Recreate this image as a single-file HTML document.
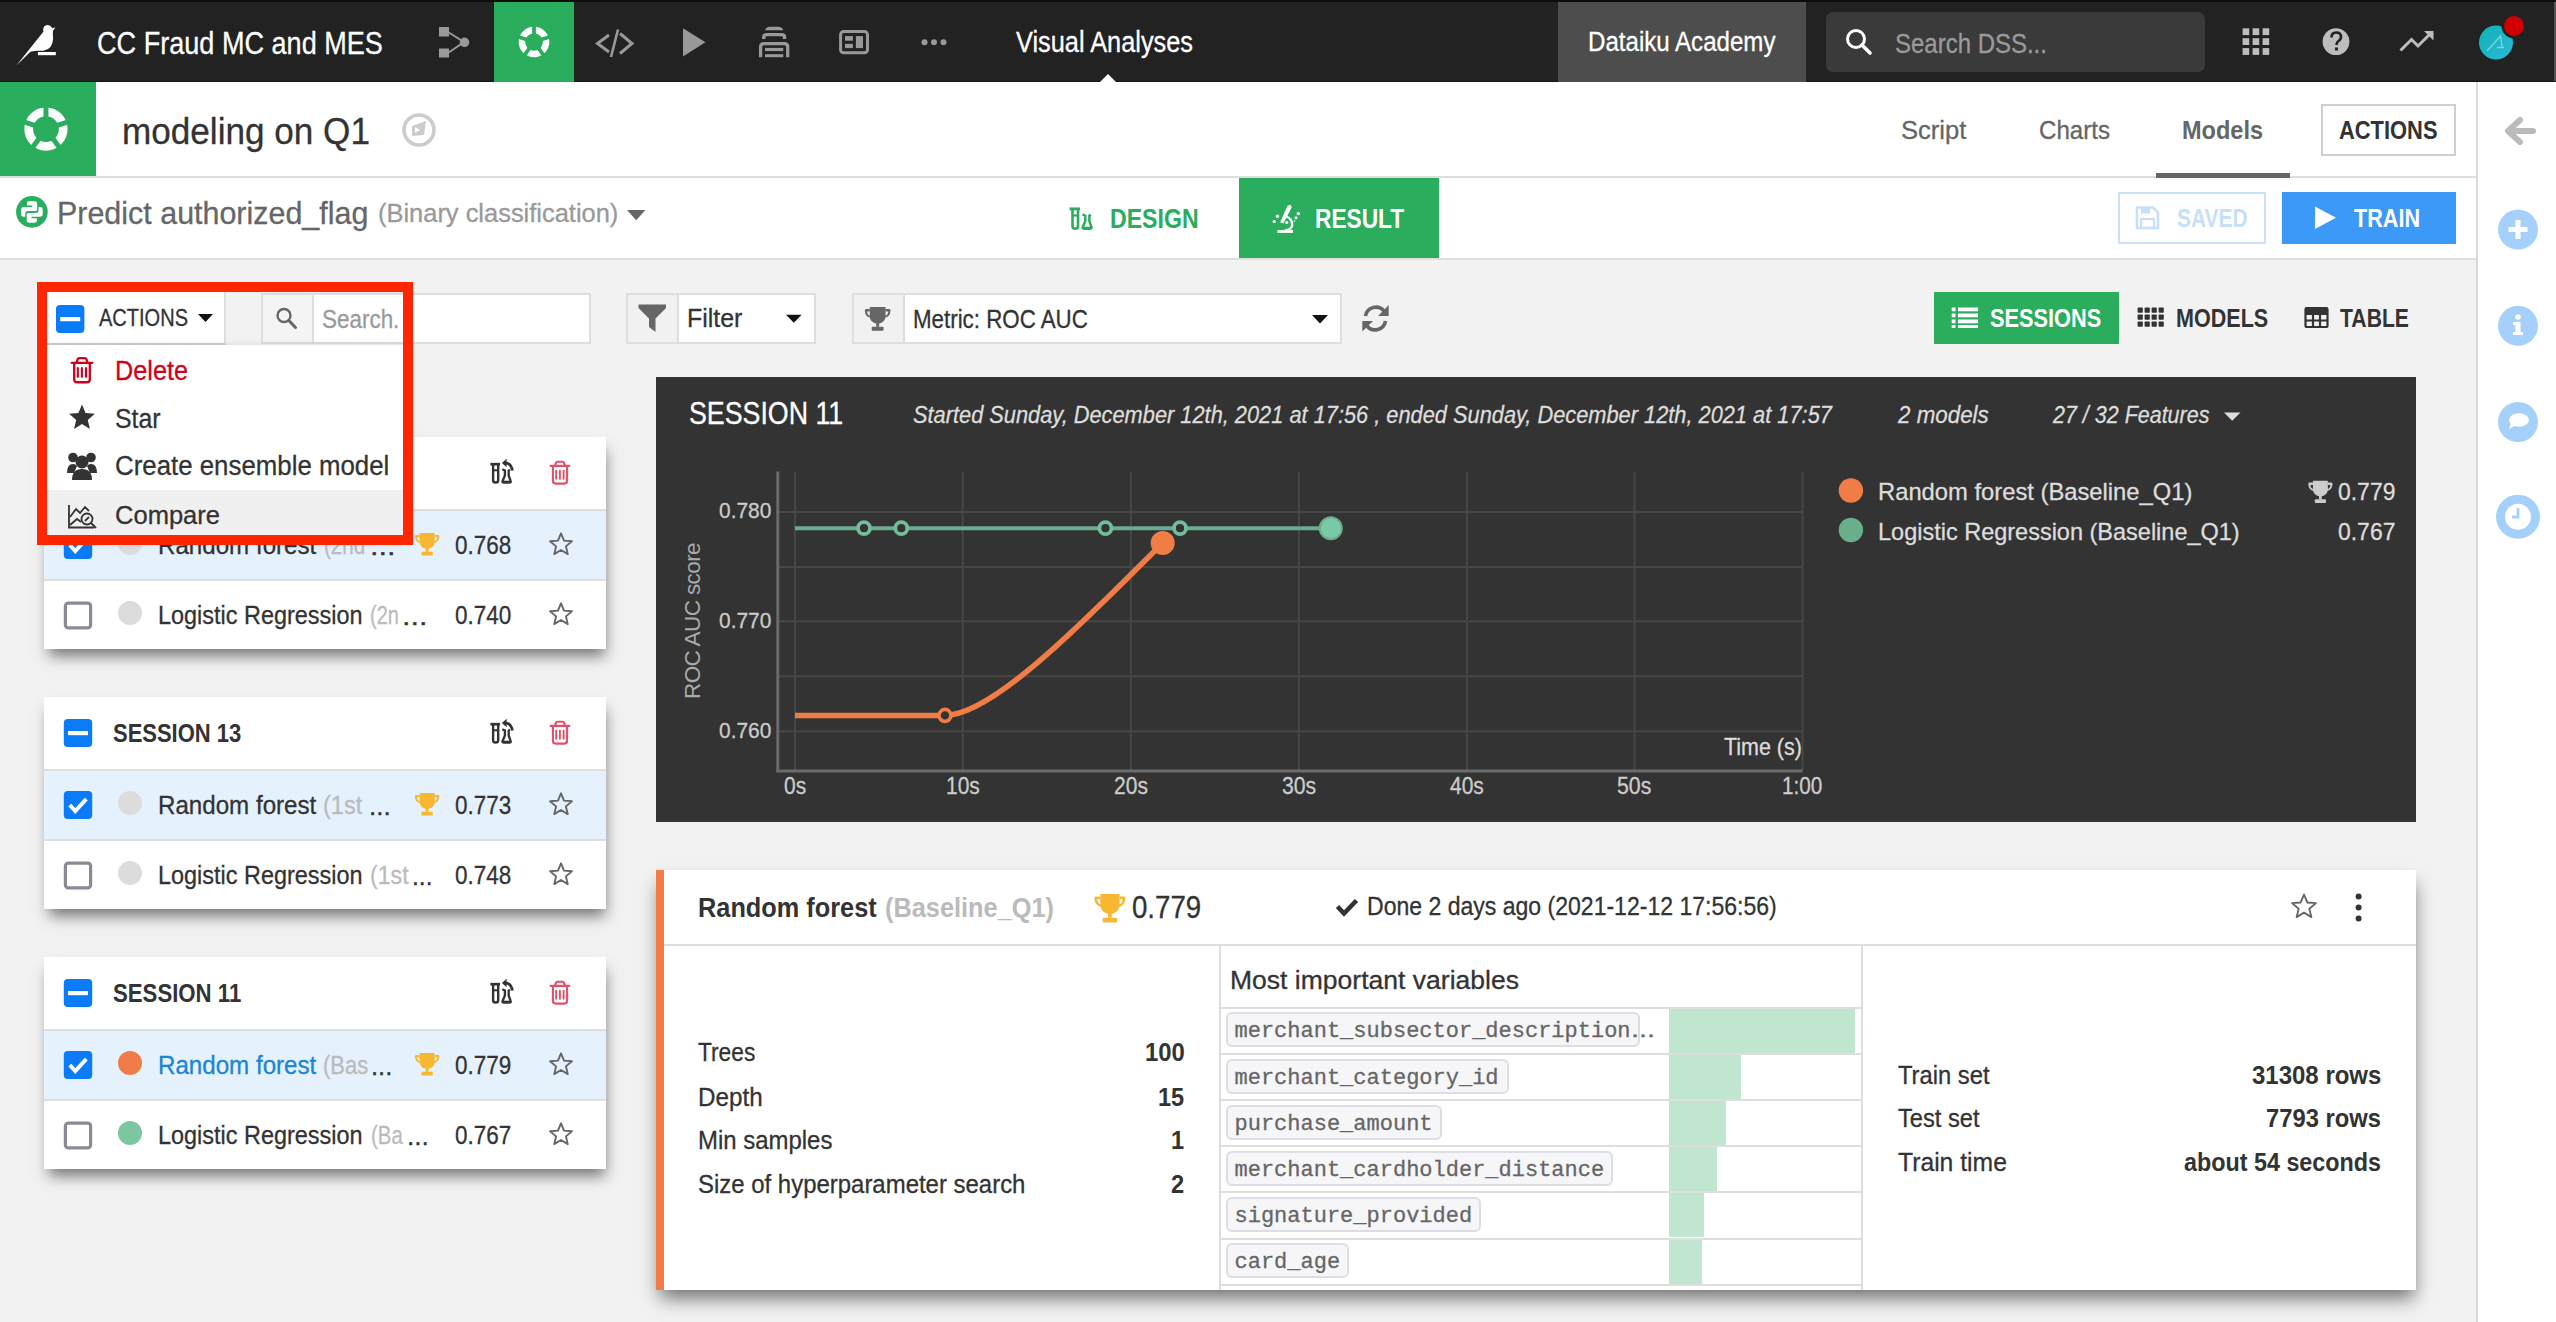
<!DOCTYPE html>
<html><head><meta charset="utf-8"><style>
html,body{margin:0;padding:0;}
body{width:2556px;height:1322px;overflow:hidden;background:#f2f2f2;position:relative;font-family:"Liberation Sans",sans-serif;}
.b{position:absolute;}
.t{position:absolute;white-space:nowrap;transform-origin:0 0;}
.ov{position:absolute;left:0;top:0;}
.L{position:absolute;left:0;top:0;width:2556px;height:1322px;}
</style></head><body>
<div class="L" style="z-index:1"><div class="b" style="left:0px;top:0px;width:2556px;height:2px;background:#0d0d0d;"></div><div class="b" style="left:0px;top:2px;width:2556px;height:80px;background:#222222;"></div><div class="b" style="left:2554px;top:2px;width:2px;height:80px;background:#555555;"></div><div class="b" style="left:0px;top:81px;width:2556px;height:1px;background:#161616;"></div><div class="b" style="left:494px;top:2px;width:80px;height:80px;background:#2aad5c;"></div><div class="b" style="left:1558px;top:2px;width:248px;height:80px;background:#4d4d4d;"></div><div class="b" style="left:1826px;top:12px;width:379px;height:60px;background:#3a3a3a;border-radius:7px;"></div><div class="b" style="left:0px;top:82px;width:2476px;height:95px;background:#ffffff;"></div><div class="b" style="left:0px;top:176px;width:2476px;height:2px;background:#dedede;"></div><div class="b" style="left:0px;top:82px;width:96px;height:94px;background:#2aad5c;"></div><div class="b" style="left:0px;top:178px;width:2476px;height:80px;background:#ffffff;"></div><div class="b" style="left:0px;top:258px;width:2476px;height:2px;background:#dedede;"></div><div class="b" style="left:1239px;top:178px;width:200px;height:80px;background:#2aad5c;"></div><div class="b" style="left:2156px;top:173px;width:134px;height:5px;background:#666666;"></div><div class="b" style="left:2321px;top:104px;width:135px;height:52px;background:transparent;border:2px solid #cfcfcf;box-sizing:border-box;"></div><div class="b" style="left:2118px;top:192px;width:148px;height:52px;background:#ffffff;border:2px solid #c8e1fb;box-sizing:border-box;"></div><div class="b" style="left:2282px;top:192px;width:174px;height:52px;background:#3d99f7;"></div><div class="b" style="left:2476px;top:82px;width:80px;height:1240px;background:#ffffff;"></div><div class="b" style="left:2476px;top:82px;width:2px;height:1240px;background:#dadada;"></div><div class="b" style="left:261px;top:293px;width:330px;height:51px;background:#ffffff;border:2px solid #dedede;box-sizing:border-box;"></div><div class="b" style="left:263px;top:295px;width:49px;height:47px;background:#f4f4f4;border-right:2px solid #dedede;"></div><div class="b" style="left:626px;top:293px;width:190px;height:51px;background:#ffffff;border:2px solid #dedede;box-sizing:border-box;"></div><div class="b" style="left:628px;top:295px;width:49px;height:47px;background:#f1f1f1;border-right:2px solid #dedede;"></div><div class="b" style="left:852px;top:293px;width:490px;height:51px;background:#ffffff;border:2px solid #dedede;box-sizing:border-box;"></div><div class="b" style="left:854px;top:295px;width:49px;height:47px;background:#f1f1f1;border-right:2px solid #dedede;"></div><div class="b" style="left:1934px;top:292px;width:185px;height:52px;background:#2aad5c;"></div><div class="b" style="left:44px;top:437px;width:562px;height:212px;background:#ffffff;box-shadow:2px 10px 14px -3px rgba(0,0,0,0.52);"></div><div class="b" style="left:44px;top:509px;width:562px;height:2px;background:#dedede;"></div><div class="b" style="left:44px;top:511px;width:562px;height:68px;background:#e5f1fd;"></div><div class="b" style="left:44px;top:579px;width:562px;height:2px;background:#dedede;"></div><div class="b" style="left:44px;top:697px;width:562px;height:212px;background:#ffffff;box-shadow:2px 10px 14px -3px rgba(0,0,0,0.52);"></div><div class="b" style="left:44px;top:769px;width:562px;height:2px;background:#dedede;"></div><div class="b" style="left:44px;top:771px;width:562px;height:68px;background:#e5f1fd;"></div><div class="b" style="left:44px;top:839px;width:562px;height:2px;background:#dedede;"></div><div class="b" style="left:44px;top:957px;width:562px;height:212px;background:#ffffff;box-shadow:2px 10px 14px -3px rgba(0,0,0,0.52);"></div><div class="b" style="left:44px;top:1029px;width:562px;height:2px;background:#dedede;"></div><div class="b" style="left:44px;top:1031px;width:562px;height:68px;background:#e5f1fd;"></div><div class="b" style="left:44px;top:1099px;width:562px;height:2px;background:#dedede;"></div><div class="b" style="left:656px;top:377px;width:1760px;height:445px;background:#333333;"></div><div class="b" style="left:656px;top:870px;width:1760px;height:420px;background:#ffffff;box-shadow:1px 11px 18px -3px rgba(0,0,0,0.55);"></div><div class="b" style="left:656px;top:870px;width:8px;height:420px;background:#f07c48;"></div><div class="b" style="left:664px;top:944px;width:1752px;height:2px;background:#dedede;"></div><div class="b" style="left:1219px;top:946px;width:2px;height:344px;background:#dedede;"></div><div class="b" style="left:1861px;top:946px;width:2px;height:344px;background:#dedede;"></div><div class="b" style="left:1221px;top:1007px;width:640px;height:2px;background:#dedede;"></div><div class="b" style="left:1221px;top:1053px;width:640px;height:2px;background:#dedede;"></div><div class="b" style="left:1221px;top:1099px;width:640px;height:2px;background:#dedede;"></div><div class="b" style="left:1221px;top:1145px;width:640px;height:2px;background:#dedede;"></div><div class="b" style="left:1221px;top:1191px;width:640px;height:2px;background:#dedede;"></div><div class="b" style="left:1221px;top:1238px;width:640px;height:2px;background:#dedede;"></div><div class="b" style="left:1221px;top:1284px;width:640px;height:2px;background:#dedede;"></div><div class="b" style="left:1668.6px;top:1009px;width:186.8px;height:44px;background:#c0e6d0;"></div><div class="b" style="left:1225.5px;top:1012px;width:414.9px;height:35px;background:#f6f6f9;border:2px solid #dcdde5;border-radius:6px;box-sizing:border-box;"></div><div class="b" style="left:1668.6px;top:1055px;width:72.8px;height:44px;background:#c0e6d0;"></div><div class="b" style="left:1225.5px;top:1059px;width:283.0px;height:35px;background:#f6f6f9;border:2px solid #dcdde5;border-radius:6px;box-sizing:border-box;"></div><div class="b" style="left:1668.6px;top:1101px;width:57.3px;height:44px;background:#c0e6d0;"></div><div class="b" style="left:1225.5px;top:1105px;width:216.5px;height:35px;background:#f6f6f9;border:2px solid #dcdde5;border-radius:6px;box-sizing:border-box;"></div><div class="b" style="left:1668.6px;top:1147px;width:48.4px;height:44px;background:#c0e6d0;"></div><div class="b" style="left:1225.5px;top:1151px;width:387.3px;height:35px;background:#f6f6f9;border:2px solid #dcdde5;border-radius:6px;box-sizing:border-box;"></div><div class="b" style="left:1668.6px;top:1193px;width:35.4px;height:44px;background:#c0e6d0;"></div><div class="b" style="left:1225.5px;top:1197px;width:255.3px;height:35px;background:#f6f6f9;border:2px solid #dcdde5;border-radius:6px;box-sizing:border-box;"></div><div class="b" style="left:1668.6px;top:1240px;width:33.0px;height:44px;background:#c0e6d0;"></div><div class="b" style="left:1225.5px;top:1243px;width:123.9px;height:35px;background:#f6f6f9;border:2px solid #dcdde5;border-radius:6px;box-sizing:border-box;"></div></div>
<div class="L" style="z-index:2"><svg class="ov" width="2556" height="1322" viewBox="0 0 2556 1322"><path d="M 16.35 65.61 L 30.42 51.77 Q 32.24 50.86 36.77 50.63 L 43.58 50.63 Q 52.66 49.50 53.12 38.60 Q 52.57 33.16 53.03 30.66 L 55.48 27.17 L 52.44 28.16 Q 50.39 24.76 47.22 24.99 Q 43.58 25.44 43.13 29.53 L 43.36 31.80 Z" fill="#fff"/><rect x="37.9" y="52" width="17.9" height="3.2" fill="#fff"/><rect x="439" y="27" width="10" height="9.5" fill="#999999"/><rect x="439" y="48.5" width="10" height="9" fill="#999999"/><circle cx="464.5" cy="42.3" r="4.8" fill="#999999"/><path d="M448 32 L464 42 L448 53" stroke="#999999" stroke-width="2" fill="none"/><circle cx="534" cy="42" r="12.05" stroke="#fff" stroke-width="6.5" fill="none"/><line x1="534.00" y1="36.45" x2="534.00" y2="23.45" stroke="#2aad5c" stroke-width="3.8"/><line x1="539.28" y1="40.28" x2="551.64" y2="36.27" stroke="#2aad5c" stroke-width="3.8"/><line x1="537.26" y1="46.49" x2="544.90" y2="57.01" stroke="#2aad5c" stroke-width="3.8"/><line x1="530.74" y1="46.49" x2="523.10" y2="57.01" stroke="#2aad5c" stroke-width="3.8"/><line x1="528.72" y1="40.28" x2="516.36" y2="36.27" stroke="#2aad5c" stroke-width="3.8"/><circle cx="45.96" cy="129.05" r="17.25" stroke="#fff" stroke-width="8.7" fill="none"/><line x1="45.96" y1="120.50" x2="45.96" y2="103.10" stroke="#2aad5c" stroke-width="5"/><line x1="54.09" y1="126.41" x2="70.64" y2="121.03" stroke="#2aad5c" stroke-width="5"/><line x1="50.99" y1="135.97" x2="61.21" y2="150.04" stroke="#2aad5c" stroke-width="5"/><line x1="40.93" y1="135.97" x2="30.71" y2="150.04" stroke="#2aad5c" stroke-width="5"/><line x1="37.83" y1="126.41" x2="21.28" y2="121.03" stroke="#2aad5c" stroke-width="5"/><path d="M609 35 L597.5 43.5 L609 52 M620 33.5 L632 43.5 L620 53.5" stroke="#999999" stroke-width="3" fill="none"/><path d="M618 29.5 L611 57" stroke="#999999" stroke-width="2.6"/><path d="M683 28.2 L705.4 42.3 L683 56.4 Z" fill="#999999"/><path d="M765 30.3 Q766 26.8 770 26.8 L778.3 26.8 Q782.3 26.8 783.3 30.3 Z" fill="#999999"/><path d="M763.8 39.1 L763.8 37 Q763.8 34.6 767 34.6 L781.3 34.6 Q784.5 34.6 784.5 37 L784.5 39.1" stroke="#999999" stroke-width="3.4" fill="none"/><path d="M760.6 57.2 L760.6 47 Q760.6 43.6 764 43.6 L784.3 43.6 Q787.7 43.6 787.7 47 L787.7 57.2" stroke="#999999" stroke-width="3.3" fill="none"/><rect x="765" y="47.9" width="18.3" height="3.2" fill="#999999"/><rect x="765" y="54.2" width="18.3" height="3" fill="#999999"/><rect x="840.6" y="31.6" width="26.9" height="21.1" rx="3" stroke="#999999" stroke-width="3" fill="none"/><rect x="845" y="36.1" width="7.9" height="4.6" fill="#999999"/><rect x="845" y="43.8" width="7.9" height="4.3" fill="#999999"/><rect x="855.9" y="36.1" width="7.1" height="12" fill="#999999"/><circle cx="924.5" cy="42.3" r="3" fill="#999999"/><circle cx="934" cy="42.3" r="3" fill="#999999"/><circle cx="943.5" cy="42.3" r="3" fill="#999999"/><path d="M1100 82 L1108 74 L1116 82 Z" fill="#fff"/><circle cx="1856" cy="39" r="8.5" stroke="#fff" stroke-width="3" fill="none"/><path d="M1862 45 L1870 53" stroke="#fff" stroke-width="3.6" stroke-linecap="round"/><rect x="2242.6" y="28.3" width="6.6" height="6.8" fill="#bdbdbd"/><rect x="2242.6" y="38.2" width="6.6" height="6.8" fill="#bdbdbd"/><rect x="2242.6" y="48.1" width="6.6" height="6.8" fill="#bdbdbd"/><rect x="2252.6" y="28.3" width="6.6" height="6.8" fill="#bdbdbd"/><rect x="2252.6" y="38.2" width="6.6" height="6.8" fill="#bdbdbd"/><rect x="2252.6" y="48.1" width="6.6" height="6.8" fill="#bdbdbd"/><rect x="2262.6" y="28.3" width="6.6" height="6.8" fill="#bdbdbd"/><rect x="2262.6" y="38.2" width="6.6" height="6.8" fill="#bdbdbd"/><rect x="2262.6" y="48.1" width="6.6" height="6.8" fill="#bdbdbd"/><circle cx="2336" cy="41.7" r="13.4" fill="#bdbdbd"/><path d="M2331.5 37.5 Q2331.5 32.5 2336.2 32.5 Q2341 32.5 2341 36.8 Q2341 39.5 2338.5 41 Q2336.5 42.3 2336.5 45" stroke="#222" stroke-width="2.6" fill="none"/><rect x="2335" y="47.5" width="3" height="3" fill="#222"/><path d="M2400.5 50.5 L2411.5 39.5 L2418 46 L2430 34" stroke="#bdbdbd" stroke-width="3" fill="none"/><path d="M2424 31 L2433.5 31 L2433.5 40.5 Z" fill="#bdbdbd"/><defs><linearGradient id="av" x1="0" y1="0" x2="1" y2="1"><stop offset="0" stop-color="#0fb3b3"/><stop offset="1" stop-color="#2cb8d8"/></linearGradient></defs><circle cx="2496" cy="42.5" r="17" fill="url(#av)"/><path d="M2487 51 L2500.5 36 L2502 47 M2497 47.5 L2504 47.5" stroke="#7fd6e0" stroke-width="1.3" fill="none"/><circle cx="2514" cy="26" r="11.2" fill="#d00000" stroke="#222" stroke-width="2.6"/><circle cx="419" cy="130" r="15" stroke="#cccccc" stroke-width="3.6" fill="none"/><path d="M412 136 L412 126 L426 121 L424 135 Z" fill="#cccccc"/><path d="M415 133 L415 127 L420 130 Z" fill="#fff"/><circle cx="31.9" cy="211.9" r="15.8" fill="#2aad5c"/><path d="M 28.96 201.13 L 35.05 201.13 Q 37.14 201.13 37.14 203.22 L 37.14 209.49 Q 37.14 210.88 35.75 210.88 L 28.09 210.88 Q 25.31 210.88 25.31 213.66 L 25.31 216.79 L 23.22 216.79 Q 21.13 216.79 21.13 214.36 L 21.13 209.49 Q 21.13 207.05 23.57 207.05 L 32.27 207.05 L 32.27 205.48 L 26.88 205.48 L 26.88 203.22 Q 26.88 201.13 28.96 201.13 Z" fill="#fff"/><path d="M 28.96 201.13 L 35.05 201.13 Q 37.14 201.13 37.14 203.22 L 37.14 209.49 Q 37.14 210.88 35.75 210.88 L 28.09 210.88 Q 25.31 210.88 25.31 213.66 L 25.31 216.79 L 23.22 216.79 Q 21.13 216.79 21.13 214.36 L 21.13 209.49 Q 21.13 207.05 23.57 207.05 L 32.27 207.05 L 32.27 205.48 L 26.88 205.48 L 26.88 203.22 Q 26.88 201.13 28.96 201.13 Z" fill="#fff" transform="rotate(180 31.92 211.92)"/><path d="M627 210 L645.4 210 L636.2 220.3 Z" fill="#666"/><path d="M1289.8 205.3 Q1291.5 206 1291 207.5 L1283 222.8 L1281 222 L1287.8 206.5 Z" fill="#fff" stroke="#fff" stroke-width="1.2"/><path d="M1286.5 216.5 Q1292.5 219 1292.2 225 Q1291.5 230 1285 230.5" stroke="#fff" stroke-width="2.3" fill="none"/><rect x="1277.4" y="230.1" width="15.6" height="2.8" fill="#fff"/><circle cx="1277.4" cy="216.2" r="1.7" fill="#fff"/><circle cx="1274.2" cy="221.5" r="1.6" fill="#fff"/><circle cx="1298.3" cy="213.6" r="1.7" fill="#fff"/><circle cx="1296" cy="217.7" r="1.5" fill="#fff"/><circle cx="1294.5" cy="221" r="0.8" fill="#fff"/><circle cx="1286.8" cy="222.5" r="1.6" fill="#fff"/><path d="M2137 207.6 L2153 207.6 L2158 212.6 L2158 228 L2137 228 Z" stroke="#c6e0fa" stroke-width="2.5" fill="none"/><rect x="2141" y="207.6" width="9" height="6" fill="#c6e0fa"/><rect x="2141" y="219" width="13" height="9" stroke="#c6e0fa" stroke-width="2.2" fill="none"/><path d="M2315 206.4 L2336 217.7 L2315 229 Z" fill="#fff"/><circle cx="284" cy="315.5" r="6.5" stroke="#666" stroke-width="2.4" fill="none"/><path d="M288.8 320.5 L295.5 327.5" stroke="#666" stroke-width="3" stroke-linecap="round"/><path d="M638.5 304.6 L666 304.6 L666 308 L655.5 318.5 L655.5 332 L649 327 L649 318.5 L638.5 308 Z" fill="#666"/><path d="M786 314.7 L801.6 314.7 L793.8 322.7 Z" fill="#111"/><g transform="translate(864.8,307) scale(0.9884615384615384)" fill="#666"><path d="M5 0 L21 0 L21 9 Q21 16 13 17 Q5 16 5 9 Z"/><path d="M5 2 L1 2 Q0 2 0 4 Q0.5 10 6 11 L6 9 Q2.5 8.5 2.3 4.5 L5 4.5 Z"/><path d="M21 2 L25 2 Q26 2 26 4 Q25.5 10 20 11 L20 9 Q23.5 8.5 23.7 4.5 L21 4.5 Z"/><rect x="11.5" y="16" width="3" height="4"/><rect x="7" y="20" width="12" height="4" rx="1"/></g><path d="M1312 315 L1328 315 L1320 323.5 Z" fill="#111"/><g stroke="#666" stroke-width="3.6" fill="none"><path d="M1365.5 316 A10.5 10.5 0 0 1 1384 311"/><path d="M1385.5 321 A10.5 10.5 0 0 1 1367 326"/></g><path d="M1388.7 305 L1388.7 316 L1378 316 Z" fill="#666"/><path d="M1362.3 331.6 L1362.3 321 L1373 321 Z" fill="#666"/><g fill="#fff"><rect x="1951.7" y="307.5" width="3.8" height="3.8"/><rect x="1951.7" y="313.5" width="3.8" height="3.8"/><rect x="1951.7" y="319.5" width="3.8" height="3.8"/><rect x="1951.7" y="325" width="3.8" height="3"/><rect x="1958" y="307.5" width="20" height="3.8"/><rect x="1958" y="313.5" width="20" height="3.8"/><rect x="1958" y="319.5" width="20" height="3.8"/><rect x="1958" y="325" width="20" height="3"/></g><rect x="2137.6" y="307.5" width="5.2" height="5.2" rx="0.8" fill="#333"/><rect x="2137.6" y="314.5" width="5.2" height="5.2" rx="0.8" fill="#333"/><rect x="2137.6" y="321.5" width="5.2" height="5.2" rx="0.8" fill="#333"/><rect x="2144.6" y="307.5" width="5.2" height="5.2" rx="0.8" fill="#333"/><rect x="2144.6" y="314.5" width="5.2" height="5.2" rx="0.8" fill="#333"/><rect x="2144.6" y="321.5" width="5.2" height="5.2" rx="0.8" fill="#333"/><rect x="2151.6" y="307.5" width="5.2" height="5.2" rx="0.8" fill="#333"/><rect x="2151.6" y="314.5" width="5.2" height="5.2" rx="0.8" fill="#333"/><rect x="2151.6" y="321.5" width="5.2" height="5.2" rx="0.8" fill="#333"/><rect x="2158.6" y="307.5" width="5.2" height="5.2" rx="0.8" fill="#333"/><rect x="2158.6" y="314.5" width="5.2" height="5.2" rx="0.8" fill="#333"/><rect x="2158.6" y="321.5" width="5.2" height="5.2" rx="0.8" fill="#333"/><g stroke="#333" stroke-width="2.2" fill="none"><rect x="2305.5" y="308" width="22" height="19" rx="1.5"/><path d="M2305.5 314 L2327.5 314 M2305.5 320.5 L2327.5 320.5 M2313 314 L2313 327 M2320 314 L2320 327"/></g><rect x="2305" y="307.5" width="23" height="6" fill="#333"/><path d="M2533 131 L2510 131 M2520 120 L2508 131 L2520 142" stroke="#bbbbbb" stroke-width="6" fill="none" stroke-linejoin="round" stroke-linecap="round"/><circle cx="2518" cy="229.6" r="20" fill="#a5d0fb"/><path d="M2518 220 L2518 239 M2508.5 229.6 L2527.5 229.6" stroke="#fff" stroke-width="5"/><circle cx="2518" cy="325.8" r="20" fill="#a5d0fb"/><circle cx="2518" cy="317" r="2.8" fill="#fff"/><path d="M2513 322 L2520.5 322 L2520.5 332 L2523 332 L2523 335 L2513 335 L2513 332 L2515.5 332 L2515.5 325 L2513 325 Z" fill="#fff"/><circle cx="2518" cy="422" r="20" fill="#a5d0fb"/><ellipse cx="2519" cy="420" rx="10" ry="6.8" fill="#fff"/><path d="M2511 423 L2509 429 L2516 425 Z" fill="#fff"/><circle cx="2518" cy="516.8" r="17.5" stroke="#a5d0fb" stroke-width="9" fill="#fff"/><path d="M2518 508 L2518 517 L2512 517" stroke="#a5d0fb" stroke-width="2.8" fill="none"/><rect x="63.8" y="459" width="28.4" height="28" rx="4" fill="#0a7cf9"/><rect x="68.0" y="471" width="20" height="4.2" fill="#fff"/><g transform="translate(480,450)" fill="none" stroke="#333"><path d="M10.4 14.2 L20 14.2" stroke-width="2.7"/><path d="M13.1 14.5 L13.1 30.2 Q13.1 32.5 15.65 32.5 Q18.2 32.5 18.2 30.2 L18.2 14.5" stroke-width="2.4"/><path d="M13.1 20.3 L18.2 20.3" stroke-width="2"/><path d="M22.3 19.3 L24.9 20.5 L24.9 25.5 L22.6 31 Q22 32.5 24 32.5 L29.3 32.5 Q31.2 32.5 30.6 31 L28.7 25.5 L28.7 20.5 L30 19.6" stroke-width="2.3"/><path d="M23 31.8 L30.2 31.8" stroke-width="2.2"/><path d="M25.5 12.9 Q30.8 13.2 32.6 20.5" stroke-width="2.6"/><path d="M21.9 12.9 L26.6 8.8 L26.6 17.2 Z" fill="#333" stroke="none"/></g><g transform="translate(550,457) scale(1.0)" stroke="#e0506a" stroke-width="2.1" fill="none" stroke-linecap="round"><path d="M5.1 8.6 L6 5.6 Q6.4 4.7 7.6 4.7 L12.4 4.7 Q13.6 4.7 14 5.6 L14.9 8.6"/><path d="M0.6 8.9 L19.4 8.9"/><path d="M2.9 9.5 L2.9 23.8 Q2.9 26.6 5.7 26.6 L14.3 26.6 Q17.1 26.6 17.1 23.8 L17.1 9.5"/><path d="M6.2 13.6 L6.2 21.7 M9.9 13.6 L9.9 21.7 M13.6 13.6 L13.6 21.7" stroke-width="1.9"/></g><rect x="63.8" y="531" width="28.4" height="28" rx="4" fill="#0a7cf9"/><path d="M69.8 545 L75.3 551 L86.3 539" stroke="#fff" stroke-width="4" fill="none"/><circle cx="130" cy="543" r="12" fill="#dcdcdc"/><g transform="translate(414.9,533) scale(0.9423076923076923)" fill="#f7b731"><path d="M5 0 L21 0 L21 9 Q21 16 13 17 Q5 16 5 9 Z"/><path d="M5 2 L1 2 Q0 2 0 4 Q0.5 10 6 11 L6 9 Q2.5 8.5 2.3 4.5 L5 4.5 Z"/><path d="M21 2 L25 2 Q26 2 26 4 Q25.5 10 20 11 L20 9 Q23.5 8.5 23.7 4.5 L21 4.5 Z"/><rect x="11.5" y="16" width="3" height="4"/><rect x="7" y="20" width="12" height="4" rx="1"/></g><polygon points="561.00,533.30 564.04,540.61 571.94,541.25 565.92,546.40 567.76,554.10 561.00,549.97 554.24,554.10 556.08,546.40 550.06,541.25 557.96,540.61" fill="none" stroke="#666" stroke-width="1.9" stroke-linejoin="round"/><rect x="65.39999999999999" y="603.1" width="25.2" height="24.8" rx="3" fill="#fff" stroke="#8a8a96" stroke-width="3.2"/><circle cx="130" cy="613" r="12" fill="#dcdcdc"/><polygon points="561.00,603.30 564.04,610.61 571.94,611.25 565.92,616.40 567.76,624.10 561.00,619.97 554.24,624.10 556.08,616.40 550.06,611.25 557.96,610.61" fill="none" stroke="#666" stroke-width="1.9" stroke-linejoin="round"/><rect x="63.8" y="719" width="28.4" height="28" rx="4" fill="#0a7cf9"/><rect x="68.0" y="731" width="20" height="4.2" fill="#fff"/><g transform="translate(480,710)" fill="none" stroke="#333"><path d="M10.4 14.2 L20 14.2" stroke-width="2.7"/><path d="M13.1 14.5 L13.1 30.2 Q13.1 32.5 15.65 32.5 Q18.2 32.5 18.2 30.2 L18.2 14.5" stroke-width="2.4"/><path d="M13.1 20.3 L18.2 20.3" stroke-width="2"/><path d="M22.3 19.3 L24.9 20.5 L24.9 25.5 L22.6 31 Q22 32.5 24 32.5 L29.3 32.5 Q31.2 32.5 30.6 31 L28.7 25.5 L28.7 20.5 L30 19.6" stroke-width="2.3"/><path d="M23 31.8 L30.2 31.8" stroke-width="2.2"/><path d="M25.5 12.9 Q30.8 13.2 32.6 20.5" stroke-width="2.6"/><path d="M21.9 12.9 L26.6 8.8 L26.6 17.2 Z" fill="#333" stroke="none"/></g><g transform="translate(550,717) scale(1.0)" stroke="#e0506a" stroke-width="2.1" fill="none" stroke-linecap="round"><path d="M5.1 8.6 L6 5.6 Q6.4 4.7 7.6 4.7 L12.4 4.7 Q13.6 4.7 14 5.6 L14.9 8.6"/><path d="M0.6 8.9 L19.4 8.9"/><path d="M2.9 9.5 L2.9 23.8 Q2.9 26.6 5.7 26.6 L14.3 26.6 Q17.1 26.6 17.1 23.8 L17.1 9.5"/><path d="M6.2 13.6 L6.2 21.7 M9.9 13.6 L9.9 21.7 M13.6 13.6 L13.6 21.7" stroke-width="1.9"/></g><rect x="63.8" y="791" width="28.4" height="28" rx="4" fill="#0a7cf9"/><path d="M69.8 805 L75.3 811 L86.3 799" stroke="#fff" stroke-width="4" fill="none"/><circle cx="130" cy="803" r="12" fill="#dcdcdc"/><g transform="translate(414.9,793) scale(0.9423076923076923)" fill="#f7b731"><path d="M5 0 L21 0 L21 9 Q21 16 13 17 Q5 16 5 9 Z"/><path d="M5 2 L1 2 Q0 2 0 4 Q0.5 10 6 11 L6 9 Q2.5 8.5 2.3 4.5 L5 4.5 Z"/><path d="M21 2 L25 2 Q26 2 26 4 Q25.5 10 20 11 L20 9 Q23.5 8.5 23.7 4.5 L21 4.5 Z"/><rect x="11.5" y="16" width="3" height="4"/><rect x="7" y="20" width="12" height="4" rx="1"/></g><polygon points="561.00,793.30 564.04,800.61 571.94,801.25 565.92,806.40 567.76,814.10 561.00,809.97 554.24,814.10 556.08,806.40 550.06,801.25 557.96,800.61" fill="none" stroke="#666" stroke-width="1.9" stroke-linejoin="round"/><rect x="65.39999999999999" y="863.1" width="25.2" height="24.8" rx="3" fill="#fff" stroke="#8a8a96" stroke-width="3.2"/><circle cx="130" cy="873" r="12" fill="#dcdcdc"/><polygon points="561.00,863.30 564.04,870.61 571.94,871.25 565.92,876.40 567.76,884.10 561.00,879.97 554.24,884.10 556.08,876.40 550.06,871.25 557.96,870.61" fill="none" stroke="#666" stroke-width="1.9" stroke-linejoin="round"/><rect x="63.8" y="979" width="28.4" height="28" rx="4" fill="#0a7cf9"/><rect x="68.0" y="991" width="20" height="4.2" fill="#fff"/><g transform="translate(480,970)" fill="none" stroke="#333"><path d="M10.4 14.2 L20 14.2" stroke-width="2.7"/><path d="M13.1 14.5 L13.1 30.2 Q13.1 32.5 15.65 32.5 Q18.2 32.5 18.2 30.2 L18.2 14.5" stroke-width="2.4"/><path d="M13.1 20.3 L18.2 20.3" stroke-width="2"/><path d="M22.3 19.3 L24.9 20.5 L24.9 25.5 L22.6 31 Q22 32.5 24 32.5 L29.3 32.5 Q31.2 32.5 30.6 31 L28.7 25.5 L28.7 20.5 L30 19.6" stroke-width="2.3"/><path d="M23 31.8 L30.2 31.8" stroke-width="2.2"/><path d="M25.5 12.9 Q30.8 13.2 32.6 20.5" stroke-width="2.6"/><path d="M21.9 12.9 L26.6 8.8 L26.6 17.2 Z" fill="#333" stroke="none"/></g><g transform="translate(550,977) scale(1.0)" stroke="#e0506a" stroke-width="2.1" fill="none" stroke-linecap="round"><path d="M5.1 8.6 L6 5.6 Q6.4 4.7 7.6 4.7 L12.4 4.7 Q13.6 4.7 14 5.6 L14.9 8.6"/><path d="M0.6 8.9 L19.4 8.9"/><path d="M2.9 9.5 L2.9 23.8 Q2.9 26.6 5.7 26.6 L14.3 26.6 Q17.1 26.6 17.1 23.8 L17.1 9.5"/><path d="M6.2 13.6 L6.2 21.7 M9.9 13.6 L9.9 21.7 M13.6 13.6 L13.6 21.7" stroke-width="1.9"/></g><rect x="63.8" y="1051" width="28.4" height="28" rx="4" fill="#0a7cf9"/><path d="M69.8 1065 L75.3 1071 L86.3 1059" stroke="#fff" stroke-width="4" fill="none"/><circle cx="130" cy="1063" r="12" fill="#f07c4a"/><g transform="translate(414.9,1053) scale(0.9423076923076923)" fill="#f7b731"><path d="M5 0 L21 0 L21 9 Q21 16 13 17 Q5 16 5 9 Z"/><path d="M5 2 L1 2 Q0 2 0 4 Q0.5 10 6 11 L6 9 Q2.5 8.5 2.3 4.5 L5 4.5 Z"/><path d="M21 2 L25 2 Q26 2 26 4 Q25.5 10 20 11 L20 9 Q23.5 8.5 23.7 4.5 L21 4.5 Z"/><rect x="11.5" y="16" width="3" height="4"/><rect x="7" y="20" width="12" height="4" rx="1"/></g><polygon points="561.00,1053.30 564.04,1060.61 571.94,1061.25 565.92,1066.40 567.76,1074.10 561.00,1069.97 554.24,1074.10 556.08,1066.40 550.06,1061.25 557.96,1060.61" fill="none" stroke="#666" stroke-width="1.9" stroke-linejoin="round"/><rect x="65.39999999999999" y="1123.1" width="25.2" height="24.8" rx="3" fill="#fff" stroke="#8a8a96" stroke-width="3.2"/><circle cx="130" cy="1133" r="12" fill="#7ac7a0"/><polygon points="561.00,1123.30 564.04,1130.61 571.94,1131.25 565.92,1136.40 567.76,1144.10 561.00,1139.97 554.24,1144.10 556.08,1136.40 550.06,1131.25 557.96,1130.61" fill="none" stroke="#666" stroke-width="1.9" stroke-linejoin="round"/><g transform="translate(1069.6 207.5) scale(1.08) translate(-10.4 -12.9)"><g transform="translate(0,0)" fill="none" stroke="#2aad5c"><path d="M10.4 14.2 L20 14.2" stroke-width="2.7"/><path d="M13.1 14.5 L13.1 30.2 Q13.1 32.5 15.65 32.5 Q18.2 32.5 18.2 30.2 L18.2 14.5" stroke-width="2.4"/><path d="M13.1 20.3 L18.2 20.3" stroke-width="2"/><path d="M22.3 19.3 L24.9 20.5 L24.9 25.5 L22.6 31 Q22 32.5 24 32.5 L29.3 32.5 Q31.2 32.5 30.6 31 L28.7 25.5 L28.7 20.5 L30 19.6" stroke-width="2.3"/><path d="M23 31.8 L30.2 31.8" stroke-width="2.2"/></g></g><g transform="translate(1094.4,894) scale(1.1923076923076923)" fill="#f7b731"><path d="M5 0 L21 0 L21 9 Q21 16 13 17 Q5 16 5 9 Z"/><path d="M5 2 L1 2 Q0 2 0 4 Q0.5 10 6 11 L6 9 Q2.5 8.5 2.3 4.5 L5 4.5 Z"/><path d="M21 2 L25 2 Q26 2 26 4 Q25.5 10 20 11 L20 9 Q23.5 8.5 23.7 4.5 L21 4.5 Z"/><rect x="11.5" y="16" width="3" height="4"/><rect x="7" y="20" width="12" height="4" rx="1"/></g><path d="M1337.5 906.5 L1344 913.5 L1356.5 900.5" stroke="#333" stroke-width="4.6" fill="none"/><polygon points="2304.00,894.50 2307.31,902.45 2315.89,903.14 2309.35,908.74 2311.35,917.11 2304.00,912.62 2296.65,917.11 2298.65,908.74 2292.11,903.14 2300.69,902.45" fill="none" stroke="#666" stroke-width="1.9" stroke-linejoin="round"/><circle cx="2358.6" cy="896.5" r="3" fill="#333"/><circle cx="2358.6" cy="907.5" r="3" fill="#333"/><circle cx="2358.6" cy="918.5" r="3" fill="#333"/><line x1="778" y1="512" x2="1802.6" y2="512" stroke="#474747" stroke-width="2"/><line x1="778" y1="567" x2="1802.6" y2="567" stroke="#474747" stroke-width="2"/><line x1="778" y1="621.3" x2="1802.6" y2="621.3" stroke="#474747" stroke-width="2"/><line x1="778" y1="676.3" x2="1802.6" y2="676.3" stroke="#474747" stroke-width="2"/><line x1="778" y1="731.3" x2="1802.6" y2="731.3" stroke="#474747" stroke-width="2"/><line x1="795" y1="472" x2="795" y2="770" stroke="#474747" stroke-width="2"/><line x1="962.7" y1="472" x2="962.7" y2="770" stroke="#474747" stroke-width="2"/><line x1="1130.8" y1="472" x2="1130.8" y2="770" stroke="#474747" stroke-width="2"/><line x1="1298.8" y1="472" x2="1298.8" y2="770" stroke="#474747" stroke-width="2"/><line x1="1466.9" y1="472" x2="1466.9" y2="770" stroke="#474747" stroke-width="2"/><line x1="1634.5" y1="472" x2="1634.5" y2="770" stroke="#474747" stroke-width="2"/><line x1="1802.6" y1="472" x2="1802.6" y2="770" stroke="#474747" stroke-width="2"/><line x1="777.8" y1="471.6" x2="777.8" y2="772" stroke="#6a6a6a" stroke-width="3"/><line x1="776.3" y1="771" x2="1802.6" y2="771" stroke="#6a6a6a" stroke-width="3"/><line x1="795" y1="528.2" x2="1330.8" y2="528.2" stroke="#6aac90" stroke-width="4.1"/><circle cx="864" cy="528.2" r="6" fill="#333" stroke="#72bd9c" stroke-width="3.8"/><circle cx="901.3" cy="528.2" r="6" fill="#333" stroke="#72bd9c" stroke-width="3.8"/><circle cx="1105.4" cy="528.2" r="6" fill="#333" stroke="#72bd9c" stroke-width="3.8"/><circle cx="1180" cy="528.2" r="6" fill="#333" stroke="#72bd9c" stroke-width="3.8"/><circle cx="1330.8" cy="528.2" r="11" fill="#7acaa8" stroke="#6aac90" stroke-width="2"/><path d="M795 715.4 L945 715.4 C995 715.4 1095 610 1162.7 543" stroke="#f07c46" stroke-width="5.5" fill="none"/><circle cx="945" cy="715.4" r="6" fill="#333" stroke="#f07c46" stroke-width="3.6"/><circle cx="1162.7" cy="543" r="12" fill="#f07c46"/><circle cx="1850.9" cy="490.5" r="12.2" fill="#f07c46"/><circle cx="1850.9" cy="530" r="12.2" fill="#6aaf8c"/><g transform="translate(2308.3,480.7) scale(0.9307692307692308)" fill="#cccccc"><path d="M5 0 L21 0 L21 9 Q21 16 13 17 Q5 16 5 9 Z"/><path d="M5 2 L1 2 Q0 2 0 4 Q0.5 10 6 11 L6 9 Q2.5 8.5 2.3 4.5 L5 4.5 Z"/><path d="M21 2 L25 2 Q26 2 26 4 Q25.5 10 20 11 L20 9 Q23.5 8.5 23.7 4.5 L21 4.5 Z"/><rect x="11.5" y="16" width="3" height="4"/><rect x="7" y="20" width="12" height="4" rx="1"/></g><path d="M2224 412.6 L2240.5 412.6 L2232.2 420.8 Z" fill="#ddd"/></svg><div class="t" style="left:97.0px;top:27.0px;font-size:31.98px;line-height:31.98px;font-family:'Liberation Sans', sans-serif;font-weight:normal;font-style:normal;color:#ffffff;transform:scaleX(0.8470);-webkit-text-stroke:0.3px currentColor;">CC Fraud MC and MES</div><div class="t" style="left:1016.0px;top:27.5px;font-size:29.07px;line-height:29.07px;font-family:'Liberation Sans', sans-serif;font-weight:normal;font-style:normal;color:#ffffff;transform:scaleX(0.8717);-webkit-text-stroke:0.3px currentColor;">Visual Analyses</div><div class="t" style="left:1588.0px;top:27.3px;font-size:28.34px;line-height:28.34px;font-family:'Liberation Sans', sans-serif;font-weight:normal;font-style:normal;color:#ffffff;transform:scaleX(0.8505);-webkit-text-stroke:0.3px currentColor;">Dataiku Academy</div><div class="t" style="left:1895.0px;top:28.8px;font-size:28.34px;line-height:28.34px;font-family:'Liberation Sans', sans-serif;font-weight:normal;font-style:normal;color:#9a9a9a;transform:scaleX(0.8465);-webkit-text-stroke:0.3px currentColor;">Search DSS...</div><div class="t" style="left:122.0px;top:113.5px;font-size:36.34px;line-height:36.34px;font-family:'Liberation Sans', sans-serif;font-weight:normal;font-style:normal;color:#333;transform:scaleX(0.9667);-webkit-text-stroke:0.3px currentColor;">modeling on Q1</div><div class="t" style="left:57.0px;top:197.0px;font-size:31.98px;line-height:31.98px;font-family:'Liberation Sans', sans-serif;font-weight:normal;font-style:normal;color:#666;transform:scaleX(0.9522);-webkit-text-stroke:0.3px currentColor;">Predict authorized_flag</div><div class="t" style="left:378.0px;top:200.8px;font-size:25.44px;line-height:25.44px;font-family:'Liberation Sans', sans-serif;font-weight:normal;font-style:normal;color:#999;-webkit-text-stroke:0.3px currentColor;">(Binary classification)</div><div class="t" style="left:1901.0px;top:117.5px;font-size:25.58px;line-height:25.58px;font-family:'Liberation Sans', sans-serif;font-weight:normal;font-style:normal;color:#666;-webkit-text-stroke:0.3px currentColor;">Script</div><div class="t" style="left:2039.0px;top:117.5px;font-size:25.58px;line-height:25.58px;font-family:'Liberation Sans', sans-serif;font-weight:normal;font-style:normal;color:#666;transform:scaleX(0.9424);-webkit-text-stroke:0.3px currentColor;">Charts</div><div class="t" style="left:2182.0px;top:117.5px;font-size:25.58px;line-height:25.58px;font-family:'Liberation Sans', sans-serif;font-weight:bold;font-style:normal;color:#666;transform:scaleX(0.9191);">Models</div><div class="t" style="left:2339.0px;top:117.5px;font-size:25.58px;line-height:25.58px;font-family:'Liberation Sans', sans-serif;font-weight:bold;font-style:normal;color:#333;transform:scaleX(0.8556);">ACTIONS</div><div class="t" style="left:1109.8px;top:204.9px;font-size:27.62px;line-height:27.62px;font-family:'Liberation Sans', sans-serif;font-weight:bold;font-style:normal;color:#2aad5c;transform:scaleX(0.8366);">DESIGN</div><div class="t" style="left:1315.3px;top:204.9px;font-size:27.62px;line-height:27.62px;font-family:'Liberation Sans', sans-serif;font-weight:bold;font-style:normal;color:#ffffff;transform:scaleX(0.8229);">RESULT</div><div class="t" style="left:2176.5px;top:205.2px;font-size:26.16px;line-height:26.16px;font-family:'Liberation Sans', sans-serif;font-weight:bold;font-style:normal;color:#c6e0fa;transform:scaleX(0.7996);">SAVED</div><div class="t" style="left:2354.0px;top:205.2px;font-size:26.16px;line-height:26.16px;font-family:'Liberation Sans', sans-serif;font-weight:bold;font-style:normal;color:#ffffff;transform:scaleX(0.8257);">TRAIN</div><div class="t" style="left:321.6px;top:305.9px;font-size:26.16px;line-height:26.16px;font-family:'Liberation Sans', sans-serif;font-weight:normal;font-style:normal;color:#9a9a9a;transform:scaleX(0.8581);-webkit-text-stroke:0.3px currentColor;">Search.</div><div class="t" style="left:687.0px;top:306.3px;font-size:25.44px;line-height:25.44px;font-family:'Liberation Sans', sans-serif;font-weight:normal;font-style:normal;color:#333;transform:scaleX(0.9782);-webkit-text-stroke:0.3px currentColor;">Filter</div><div class="t" style="left:912.7px;top:305.8px;font-size:26.45px;line-height:26.45px;font-family:'Liberation Sans', sans-serif;font-weight:normal;font-style:normal;color:#333;transform:scaleX(0.8443);-webkit-text-stroke:0.3px currentColor;">Metric: ROC AUC</div><div class="t" style="left:1989.7px;top:304.9px;font-size:26.16px;line-height:26.16px;font-family:'Liberation Sans', sans-serif;font-weight:bold;font-style:normal;color:#ffffff;transform:scaleX(0.8321);">SESSIONS</div><div class="t" style="left:2175.6px;top:304.9px;font-size:26.16px;line-height:26.16px;font-family:'Liberation Sans', sans-serif;font-weight:bold;font-style:normal;color:#333;transform:scaleX(0.8239);">MODELS</div><div class="t" style="left:2340.0px;top:304.9px;font-size:26.16px;line-height:26.16px;font-family:'Liberation Sans', sans-serif;font-weight:bold;font-style:normal;color:#333;transform:scaleX(0.8090);">TABLE</div><div class="t" style="left:688.7px;top:397.7px;font-size:30.52px;line-height:30.52px;font-family:'Liberation Sans', sans-serif;font-weight:normal;font-style:normal;color:#ffffff;transform:scaleX(0.8772);-webkit-text-stroke:0.3px currentColor;">SESSION 11</div><div class="t" style="left:912.7px;top:403.1px;font-size:24.71px;line-height:24.71px;font-family:'Liberation Sans', sans-serif;font-weight:normal;font-style:italic;color:#dddddd;transform:scaleX(0.8823);-webkit-text-stroke:0.3px currentColor;">Started Sunday, December 12th, 2021 at 17:56 , ended Sunday, December 12th, 2021 at 17:57</div><div class="t" style="left:1897.7px;top:403.1px;font-size:24.71px;line-height:24.71px;font-family:'Liberation Sans', sans-serif;font-weight:normal;font-style:italic;color:#dddddd;transform:scaleX(0.9050);-webkit-text-stroke:0.3px currentColor;">2 models</div><div class="t" style="left:2053.1px;top:403.1px;font-size:24.71px;line-height:24.71px;font-family:'Liberation Sans', sans-serif;font-weight:normal;font-style:italic;color:#dddddd;transform:scaleX(0.8694);-webkit-text-stroke:0.3px currentColor;">27 / 32 Features</div><div class="t" style="left:718.6px;top:499.9px;font-size:22.38px;line-height:22.38px;font-family:'Liberation Sans', sans-serif;font-weight:normal;font-style:normal;color:#cccccc;transform:scaleX(0.9354);-webkit-text-stroke:0.3px currentColor;">0.780</div><div class="t" style="left:718.6px;top:609.8px;font-size:22.38px;line-height:22.38px;font-family:'Liberation Sans', sans-serif;font-weight:normal;font-style:normal;color:#cccccc;transform:scaleX(0.9354);-webkit-text-stroke:0.3px currentColor;">0.770</div><div class="t" style="left:718.6px;top:719.8px;font-size:22.38px;line-height:22.38px;font-family:'Liberation Sans', sans-serif;font-weight:normal;font-style:normal;color:#cccccc;transform:scaleX(0.9354);-webkit-text-stroke:0.3px currentColor;">0.760</div><div class="t" style="left:783.8px;top:775.4px;font-size:23.26px;line-height:23.26px;font-family:'Liberation Sans', sans-serif;font-weight:normal;font-style:normal;color:#cccccc;transform:scaleX(0.9007);-webkit-text-stroke:0.3px currentColor;">0s</div><div class="t" style="left:945.8px;top:775.4px;font-size:23.26px;line-height:23.26px;font-family:'Liberation Sans', sans-serif;font-weight:normal;font-style:normal;color:#cccccc;transform:scaleX(0.9013);-webkit-text-stroke:0.3px currentColor;">10s</div><div class="t" style="left:1113.8px;top:775.4px;font-size:23.26px;line-height:23.26px;font-family:'Liberation Sans', sans-serif;font-weight:normal;font-style:normal;color:#cccccc;transform:scaleX(0.9040);-webkit-text-stroke:0.3px currentColor;">20s</div><div class="t" style="left:1281.5px;top:775.4px;font-size:23.26px;line-height:23.26px;font-family:'Liberation Sans', sans-serif;font-weight:normal;font-style:normal;color:#cccccc;transform:scaleX(0.9120);-webkit-text-stroke:0.3px currentColor;">30s</div><div class="t" style="left:1449.5px;top:775.4px;font-size:23.26px;line-height:23.26px;font-family:'Liberation Sans', sans-serif;font-weight:normal;font-style:normal;color:#cccccc;transform:scaleX(0.9013);-webkit-text-stroke:0.3px currentColor;">40s</div><div class="t" style="left:1617.1px;top:775.4px;font-size:23.26px;line-height:23.26px;font-family:'Liberation Sans', sans-serif;font-weight:normal;font-style:normal;color:#cccccc;transform:scaleX(0.9147);-webkit-text-stroke:0.3px currentColor;">50s</div><div class="t" style="left:1782.4px;top:775.4px;font-size:23.26px;line-height:23.26px;font-family:'Liberation Sans', sans-serif;font-weight:normal;font-style:normal;color:#cccccc;transform:scaleX(0.8920);-webkit-text-stroke:0.3px currentColor;">1:00</div><div class="t" style="left:1723.7px;top:736.2px;font-size:23.69px;line-height:23.69px;font-family:'Liberation Sans', sans-serif;font-weight:normal;font-style:normal;color:#dddddd;transform:scaleX(0.9058);-webkit-text-stroke:0.3px currentColor;">Time (s)</div><div class="t" style="left:1878.4px;top:479.9px;font-size:24.71px;line-height:24.71px;font-family:'Liberation Sans', sans-serif;font-weight:normal;font-style:normal;color:#dddddd;transform:scaleX(0.9620);-webkit-text-stroke:0.3px currentColor;">Random forest (Baseline_Q1)</div><div class="t" style="left:2337.9px;top:479.9px;font-size:24.71px;line-height:24.71px;font-family:'Liberation Sans', sans-serif;font-weight:normal;font-style:normal;color:#dddddd;transform:scaleX(0.9283);-webkit-text-stroke:0.3px currentColor;">0.779</div><div class="t" style="left:1878.4px;top:519.6px;font-size:24.71px;line-height:24.71px;font-family:'Liberation Sans', sans-serif;font-weight:normal;font-style:normal;color:#dddddd;transform:scaleX(0.9509);-webkit-text-stroke:0.3px currentColor;">Logistic Regression (Baseline_Q1)</div><div class="t" style="left:2337.9px;top:519.6px;font-size:24.71px;line-height:24.71px;font-family:'Liberation Sans', sans-serif;font-weight:normal;font-style:normal;color:#dddddd;transform:scaleX(0.9283);-webkit-text-stroke:0.3px currentColor;">0.767</div><div class="t" style="left:692.5px;top:621px;width:0;height:0;"><div style="position:absolute;left:0;top:0;transform:translate(-50%,-50%) rotate(-90deg);font-size:22.5px;line-height:22.5px;color:#aaaaaa;white-space:nowrap;letter-spacing:-0.6px;">ROC AUC score</div></div><div class="t" style="left:112.6px;top:460.7px;font-size:25.44px;line-height:25.44px;font-family:'Liberation Sans', sans-serif;font-weight:bold;font-style:normal;color:#333;transform:scaleX(0.8638);">SESSION 12</div><div class="t" style="left:158.0px;top:533.4px;font-size:25.87px;line-height:25.87px;font-family:'Liberation Sans', sans-serif;font-weight:normal;font-style:normal;color:#333;transform:scaleX(0.9333);-webkit-text-stroke:0.3px currentColor;">Random forest</div><div class="t" style="left:323.5px;top:533.4px;font-size:25.87px;line-height:25.87px;font-family:'Liberation Sans', sans-serif;font-weight:normal;font-style:normal;color:#bbbbbb;transform:scaleX(0.7971);-webkit-text-stroke:0.3px currentColor;">(2nd</div><div class="t" style="left:370.0px;top:533.8px;font-size:25.00px;line-height:25.00px;font-family:'Liberation Sans', sans-serif;font-weight:normal;font-style:normal;color:#333;transform:scaleX(1.2300);-webkit-text-stroke:0.3px currentColor;">...</div><div class="t" style="left:455.2px;top:533.4px;font-size:25.87px;line-height:25.87px;font-family:'Liberation Sans', sans-serif;font-weight:normal;font-style:normal;color:#333;transform:scaleX(0.8696);-webkit-text-stroke:0.3px currentColor;">0.768</div><div class="t" style="left:158.0px;top:603.3px;font-size:25.87px;line-height:25.87px;font-family:'Liberation Sans', sans-serif;font-weight:normal;font-style:normal;color:#333;transform:scaleX(0.9065);-webkit-text-stroke:0.3px currentColor;">Logistic Regression</div><div class="t" style="left:370.0px;top:603.3px;font-size:25.87px;line-height:25.87px;font-family:'Liberation Sans', sans-serif;font-weight:normal;font-style:normal;color:#bbbbbb;transform:scaleX(0.7703);-webkit-text-stroke:0.3px currentColor;">(2n</div><div class="t" style="left:402.0px;top:603.7px;font-size:25.00px;line-height:25.00px;font-family:'Liberation Sans', sans-serif;font-weight:normal;font-style:normal;color:#333;transform:scaleX(1.2204);-webkit-text-stroke:0.3px currentColor;">...</div><div class="t" style="left:455.2px;top:603.3px;font-size:25.87px;line-height:25.87px;font-family:'Liberation Sans', sans-serif;font-weight:normal;font-style:normal;color:#333;transform:scaleX(0.8696);-webkit-text-stroke:0.3px currentColor;">0.740</div><div class="t" style="left:112.6px;top:720.7px;font-size:25.44px;line-height:25.44px;font-family:'Liberation Sans', sans-serif;font-weight:bold;font-style:normal;color:#333;transform:scaleX(0.8638);">SESSION 13</div><div class="t" style="left:158.0px;top:793.4px;font-size:25.87px;line-height:25.87px;font-family:'Liberation Sans', sans-serif;font-weight:normal;font-style:normal;color:#333;transform:scaleX(0.9333);-webkit-text-stroke:0.3px currentColor;">Random forest</div><div class="t" style="left:322.5px;top:793.4px;font-size:25.87px;line-height:25.87px;font-family:'Liberation Sans', sans-serif;font-weight:normal;font-style:normal;color:#bbbbbb;transform:scaleX(0.9109);-webkit-text-stroke:0.3px currentColor;">(1st</div><div class="t" style="left:369.0px;top:793.8px;font-size:25.00px;line-height:25.00px;font-family:'Liberation Sans', sans-serif;font-weight:normal;font-style:normal;color:#333;transform:scaleX(1.0378);-webkit-text-stroke:0.3px currentColor;">...</div><div class="t" style="left:455.2px;top:793.4px;font-size:25.87px;line-height:25.87px;font-family:'Liberation Sans', sans-serif;font-weight:normal;font-style:normal;color:#333;transform:scaleX(0.8696);-webkit-text-stroke:0.3px currentColor;">0.773</div><div class="t" style="left:158.0px;top:863.3px;font-size:25.87px;line-height:25.87px;font-family:'Liberation Sans', sans-serif;font-weight:normal;font-style:normal;color:#333;transform:scaleX(0.9065);-webkit-text-stroke:0.3px currentColor;">Logistic Regression</div><div class="t" style="left:370.0px;top:863.3px;font-size:25.87px;line-height:25.87px;font-family:'Liberation Sans', sans-serif;font-weight:normal;font-style:normal;color:#bbbbbb;transform:scaleX(0.8970);-webkit-text-stroke:0.3px currentColor;">(1st</div><div class="t" style="left:412.0px;top:863.7px;font-size:25.00px;line-height:25.00px;font-family:'Liberation Sans', sans-serif;font-weight:normal;font-style:normal;color:#333;transform:scaleX(0.9898);-webkit-text-stroke:0.3px currentColor;">...</div><div class="t" style="left:455.2px;top:863.3px;font-size:25.87px;line-height:25.87px;font-family:'Liberation Sans', sans-serif;font-weight:normal;font-style:normal;color:#333;transform:scaleX(0.8696);-webkit-text-stroke:0.3px currentColor;">0.748</div><div class="t" style="left:112.6px;top:980.7px;font-size:25.44px;line-height:25.44px;font-family:'Liberation Sans', sans-serif;font-weight:bold;font-style:normal;color:#333;transform:scaleX(0.8720);">SESSION 11</div><div class="t" style="left:158.0px;top:1053.4px;font-size:25.87px;line-height:25.87px;font-family:'Liberation Sans', sans-serif;font-weight:normal;font-style:normal;color:#1a86d4;transform:scaleX(0.9333);-webkit-text-stroke:0.3px currentColor;">Random forest</div><div class="t" style="left:323.2px;top:1053.4px;font-size:25.87px;line-height:25.87px;font-family:'Liberation Sans', sans-serif;font-weight:normal;font-style:normal;color:#bbbbbb;transform:scaleX(0.8483);-webkit-text-stroke:0.3px currentColor;">(Bas</div><div class="t" style="left:371.0px;top:1053.8px;font-size:25.00px;line-height:25.00px;font-family:'Liberation Sans', sans-serif;font-weight:normal;font-style:normal;color:#333;transform:scaleX(1.0234);-webkit-text-stroke:0.3px currentColor;">...</div><div class="t" style="left:455.2px;top:1053.4px;font-size:25.87px;line-height:25.87px;font-family:'Liberation Sans', sans-serif;font-weight:normal;font-style:normal;color:#333;transform:scaleX(0.8696);-webkit-text-stroke:0.3px currentColor;">0.779</div><div class="t" style="left:158.0px;top:1123.3px;font-size:25.87px;line-height:25.87px;font-family:'Liberation Sans', sans-serif;font-weight:normal;font-style:normal;color:#333;transform:scaleX(0.9065);-webkit-text-stroke:0.3px currentColor;">Logistic Regression</div><div class="t" style="left:371.0px;top:1123.3px;font-size:25.87px;line-height:25.87px;font-family:'Liberation Sans', sans-serif;font-weight:normal;font-style:normal;color:#bbbbbb;transform:scaleX(0.7892);-webkit-text-stroke:0.3px currentColor;">(Ba</div><div class="t" style="left:407.0px;top:1123.7px;font-size:25.00px;line-height:25.00px;font-family:'Liberation Sans', sans-serif;font-weight:normal;font-style:normal;color:#333;transform:scaleX(1.0523);-webkit-text-stroke:0.3px currentColor;">...</div><div class="t" style="left:455.2px;top:1123.3px;font-size:25.87px;line-height:25.87px;font-family:'Liberation Sans', sans-serif;font-weight:normal;font-style:normal;color:#333;transform:scaleX(0.8696);-webkit-text-stroke:0.3px currentColor;">0.767</div><div class="t" style="left:697.7px;top:893.9px;font-size:27.18px;line-height:27.18px;font-family:'Liberation Sans', sans-serif;font-weight:bold;font-style:normal;color:#333;transform:scaleX(0.9321);">Random forest</div><div class="t" style="left:884.7px;top:893.9px;font-size:27.18px;line-height:27.18px;font-family:'Liberation Sans', sans-serif;font-weight:bold;font-style:normal;color:#bbbbbb;transform:scaleX(0.9327);">(Baseline_Q1)</div><div class="t" style="left:1132.4px;top:892.4px;font-size:30.52px;line-height:30.52px;font-family:'Liberation Sans', sans-serif;font-weight:normal;font-style:normal;color:#333;transform:scaleX(0.9059);-webkit-text-stroke:0.3px currentColor;">0.779</div><div class="t" style="left:1366.6px;top:894.0px;font-size:25.44px;line-height:25.44px;font-family:'Liberation Sans', sans-serif;font-weight:normal;font-style:normal;color:#333;transform:scaleX(0.9054);-webkit-text-stroke:0.3px currentColor;">Done 2 days ago (2021-12-12 17:56:56)</div><div class="t" style="left:698.2px;top:1038.9px;font-size:26.16px;line-height:26.16px;font-family:'Liberation Sans', sans-serif;font-weight:normal;font-style:normal;color:#333;transform:scaleX(0.8691);-webkit-text-stroke:0.3px currentColor;">Trees</div><div class="t" style="left:1144.6px;top:1038.9px;font-size:26.16px;line-height:26.16px;font-family:'Liberation Sans', sans-serif;font-weight:bold;font-style:normal;color:#333;transform:scaleX(0.9123);">100</div><div class="t" style="left:698.2px;top:1083.6px;font-size:26.16px;line-height:26.16px;font-family:'Liberation Sans', sans-serif;font-weight:normal;font-style:normal;color:#333;transform:scaleX(0.9256);-webkit-text-stroke:0.3px currentColor;">Depth</div><div class="t" style="left:1158.2px;top:1083.6px;font-size:26.16px;line-height:26.16px;font-family:'Liberation Sans', sans-serif;font-weight:bold;font-style:normal;color:#333;transform:scaleX(0.9001);">15</div><div class="t" style="left:698.2px;top:1127.3px;font-size:26.16px;line-height:26.16px;font-family:'Liberation Sans', sans-serif;font-weight:normal;font-style:normal;color:#333;transform:scaleX(0.9153);-webkit-text-stroke:0.3px currentColor;">Min samples</div><div class="t" style="left:1171.3px;top:1127.3px;font-size:26.16px;line-height:26.16px;font-family:'Liberation Sans', sans-serif;font-weight:bold;font-style:normal;color:#333;transform:scaleX(0.9022);">1</div><div class="t" style="left:698.2px;top:1171.4px;font-size:26.16px;line-height:26.16px;font-family:'Liberation Sans', sans-serif;font-weight:normal;font-style:normal;color:#333;transform:scaleX(0.9155);-webkit-text-stroke:0.3px currentColor;">Size of hyperparameter search</div><div class="t" style="left:1171.3px;top:1171.4px;font-size:26.16px;line-height:26.16px;font-family:'Liberation Sans', sans-serif;font-weight:bold;font-style:normal;color:#333;transform:scaleX(0.9022);">2</div><div class="t" style="left:1230.0px;top:967.0px;font-size:26.60px;line-height:26.60px;font-family:'Liberation Sans', sans-serif;font-weight:normal;font-style:normal;color:#333;transform:scaleX(0.9975);-webkit-text-stroke:0.3px currentColor;">Most important variables</div><div class="t" style="left:1234.5px;top:1021.4px;font-size:22.00px;line-height:22.00px;font-family:'Liberation Mono', monospace;font-weight:normal;font-style:normal;color:#666666;-webkit-text-stroke:0.3px currentColor;transform:scaleX(1.0);">merchant_subsector_description</div><div class="t" style="left:1234.5px;top:1067.5px;font-size:22.00px;line-height:22.00px;font-family:'Liberation Mono', monospace;font-weight:normal;font-style:normal;color:#666666;-webkit-text-stroke:0.3px currentColor;transform:scaleX(1.0);">merchant_category_id</div><div class="t" style="left:1234.5px;top:1113.6px;font-size:22.00px;line-height:22.00px;font-family:'Liberation Mono', monospace;font-weight:normal;font-style:normal;color:#666666;-webkit-text-stroke:0.3px currentColor;transform:scaleX(1.0);">purchase_amount</div><div class="t" style="left:1234.5px;top:1159.7px;font-size:22.00px;line-height:22.00px;font-family:'Liberation Mono', monospace;font-weight:normal;font-style:normal;color:#666666;-webkit-text-stroke:0.3px currentColor;transform:scaleX(1.0);">merchant_cardholder_distance</div><div class="t" style="left:1234.5px;top:1205.8px;font-size:22.00px;line-height:22.00px;font-family:'Liberation Mono', monospace;font-weight:normal;font-style:normal;color:#666666;-webkit-text-stroke:0.3px currentColor;transform:scaleX(1.0);">signature_provided</div><div class="t" style="left:1234.5px;top:1251.9px;font-size:22.00px;line-height:22.00px;font-family:'Liberation Mono', monospace;font-weight:normal;font-style:normal;color:#666666;-webkit-text-stroke:0.3px currentColor;transform:scaleX(1.0);">card_age</div><div class="t" style="left:1630.5px;top:1019.4px;font-size:22.00px;line-height:22.00px;font-family:'Liberation Sans', sans-serif;font-weight:normal;font-style:normal;color:#666;transform:scaleX(1.3049);-webkit-text-stroke:0.3px currentColor;">...</div><div class="t" style="left:1897.5px;top:1061.9px;font-size:26.16px;line-height:26.16px;font-family:'Liberation Sans', sans-serif;font-weight:normal;font-style:normal;color:#333;transform:scaleX(0.9078);-webkit-text-stroke:0.3px currentColor;">Train set</div><div class="t" style="left:2252.0px;top:1061.9px;font-size:26.16px;line-height:26.16px;font-family:'Liberation Sans', sans-serif;font-weight:bold;font-style:normal;color:#333;transform:scaleX(0.9172);">31308 rows</div><div class="t" style="left:1897.5px;top:1104.7px;font-size:26.16px;line-height:26.16px;font-family:'Liberation Sans', sans-serif;font-weight:normal;font-style:normal;color:#333;transform:scaleX(0.9042);-webkit-text-stroke:0.3px currentColor;">Test set</div><div class="t" style="left:2266.4px;top:1104.7px;font-size:26.16px;line-height:26.16px;font-family:'Liberation Sans', sans-serif;font-weight:bold;font-style:normal;color:#333;transform:scaleX(0.9086);">7793 rows</div><div class="t" style="left:1897.5px;top:1148.6px;font-size:26.16px;line-height:26.16px;font-family:'Liberation Sans', sans-serif;font-weight:normal;font-style:normal;color:#333;transform:scaleX(0.9444);-webkit-text-stroke:0.3px currentColor;">Train time</div><div class="t" style="left:2184.3px;top:1148.6px;font-size:26.16px;line-height:26.16px;font-family:'Liberation Sans', sans-serif;font-weight:bold;font-style:normal;color:#333;transform:scaleX(0.8918);">about 54 seconds</div></div>
<div class="L" style="z-index:3"><div class="b" style="left:47px;top:292px;width:177px;height:51px;background:#fff;border-bottom:2px solid #cdcdcd;border-right:2px solid #dedede;box-sizing:content-box;"></div><div class="b" style="left:47px;top:345px;width:355.7px;height:190px;background:#fff;box-shadow:3px 4px 10px rgba(0,0,0,0.25);"></div><div class="b" style="left:47px;top:490px;width:355.7px;height:45px;background:#f0f0f0;"></div><div class="t" style="left:99.0px;top:307.4px;font-size:23.26px;line-height:23.26px;font-family:'Liberation Sans', sans-serif;font-weight:normal;font-style:normal;color:#333;transform:scaleX(0.8610);-webkit-text-stroke:0.3px currentColor;">ACTIONS</div><div class="t" style="left:115.0px;top:356.5px;font-size:27.91px;line-height:27.91px;font-family:'Liberation Sans', sans-serif;font-weight:normal;font-style:normal;color:#d0021b;transform:scaleX(0.9051);-webkit-text-stroke:0.3px currentColor;">Delete</div><div class="t" style="left:115.0px;top:404.5px;font-size:27.62px;line-height:27.62px;font-family:'Liberation Sans', sans-serif;font-weight:normal;font-style:normal;color:#333;transform:scaleX(0.8998);-webkit-text-stroke:0.3px currentColor;">Star</div><div class="t" style="left:115.0px;top:452.3px;font-size:27.62px;line-height:27.62px;font-family:'Liberation Sans', sans-serif;font-weight:normal;font-style:normal;color:#333;transform:scaleX(0.9358);-webkit-text-stroke:0.3px currentColor;">Create ensemble model</div><div class="t" style="left:115.0px;top:501.6px;font-size:26.60px;line-height:26.60px;font-family:'Liberation Sans', sans-serif;font-weight:normal;font-style:normal;color:#333;transform:scaleX(0.9599);-webkit-text-stroke:0.3px currentColor;">Compare</div><svg class="ov" width="2556" height="1322" viewBox="0 0 2556 1322"><rect x="56" y="305" width="28.4" height="28" rx="4" fill="#0a7cf9"/><rect x="60.2" y="317" width="20" height="4.2" fill="#fff"/><path d="M198 314 L213 314 L205.5 322 Z" fill="#111"/><g transform="translate(71,353) scale(1.1)" stroke="#d0021b" stroke-width="2.1" fill="none" stroke-linecap="round"><path d="M5.1 8.6 L6 5.6 Q6.4 4.7 7.6 4.7 L12.4 4.7 Q13.6 4.7 14 5.6 L14.9 8.6"/><path d="M0.6 8.9 L19.4 8.9"/><path d="M2.9 9.5 L2.9 23.8 Q2.9 26.6 5.7 26.6 L14.3 26.6 Q17.1 26.6 17.1 23.8 L17.1 9.5"/><path d="M6.2 13.6 L6.2 21.7 M9.9 13.6 L9.9 21.7 M13.6 13.6 L13.6 21.7" stroke-width="1.9"/></g><polygon points="82.00,404.50 85.57,413.09 94.84,413.83 87.78,419.88 89.94,428.92 82.00,424.07 74.06,428.92 76.22,419.88 69.16,413.83 78.43,413.09" fill="#333"/><g fill="#333"><circle cx="73" cy="457.5" r="4.8"/><circle cx="91" cy="457.5" r="4.8"/><circle cx="82" cy="462" r="6.5"/><path d="M67 473 Q67 464 73 464 Q76 464 77 466 L74 473 Z"/><path d="M97 473 Q97 464 91 464 Q88 464 87 466 L90 473 Z"/><path d="M72 480 Q72 469 82 469 Q92 469 92 480 Z"/></g><g stroke="#333" stroke-width="1.8" fill="none"><path d="M69 505 L69 527.5 L94 527.5"/><path d="M70 517 L76 509 L80 513 L85 507 L89 511"/><path d="M70 525 L77 519 L81 522"/><circle cx="87" cy="519" r="5.5"/><path d="M91 523 L96 528"/><path d="M85 521 L89 517"/></g></svg><div class="b" style="left:37px;top:282px;width:375.7px;height:262.7px;border:10px solid #ff2600;box-sizing:border-box;"></div></div>
</body></html>
